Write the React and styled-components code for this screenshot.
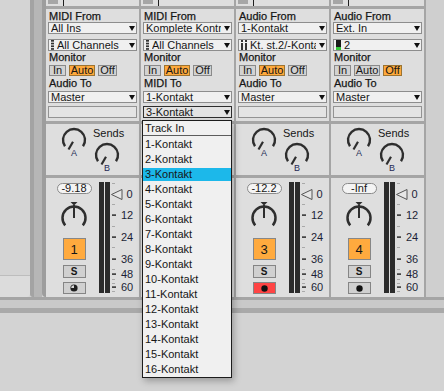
import React from "react";
import styled, { createGlobalStyle } from "styled-components";

const SEP = "#a5a5a5";
const INK = "#161616";

const GlobalStyle = createGlobalStyle`
  html, body {
    margin: 0;
    padding: 0;
    background: #d3d3d3;
  }
  body {
    font-family: "Liberation Sans", Arial, sans-serif;
    font-size: 11px;
    color: ${INK};
  }
  * {
    box-sizing: border-box;
  }
`;

const Page = styled.div`
  position: relative;
  width: 444px;
  height: 391px;
  overflow: hidden;
  display: flex;
  flex-direction: column;
  background: #d3d3d3;
`;

const Main = styled.div`
  display: flex;
  height: 297px;
  flex-shrink: 0;
`;

const LeftPane = styled.div`
  width: 30px;
  display: flex;
  flex-direction: column;
  background: #d4d4d4;
`;

const LeftFoot = styled.div`
  margin-top: auto;
  height: 22px;
  background: #dcdcdc;
  border-top: 1px solid #bdbdbd;
  border-bottom-right-radius: 4px;
`;

const Gutter = styled.div`
  width: 12px;
  background: #b6b6b6;
  border-left: 4px solid #a3a3a3;
  border-bottom-left-radius: 3px;
`;

const Tracks = styled.div`
  display: flex;
  gap: 2px;
  background: ${SEP};
  border-left: 4px solid #9d9d9d;
  border-right: 2px solid ${SEP};
  border-bottom-left-radius: 4px;
  overflow: hidden;
`;

const RightPane = styled.div`
  flex: 1;
  background: #cfcfcf;
`;

const Strip = styled.div`
  width: 93px;
  display: flex;
  flex-direction: column;
  background: #dedede;
`;

const Header = styled.div`
  height: 9px;
  flex-shrink: 0;
  display: flex;
  align-items: flex-start;
  gap: 5px;
  padding-left: 2px;
  border-bottom: 3px solid ${SEP};
`;

const HeaderTab = styled.div`
  width: 10px;
  height: 4px;
  background: #a6a6a6;
`;

const HeaderMark = styled.div`
  width: 1px;
  height: 6px;
  background: #1e1e1e;
`;

const IOSection = styled.div`
  height: 115px;
  flex-shrink: 0;
  display: flex;
  flex-direction: column;
  padding: 1px 2px 0;
  border-bottom: 3px solid ${SEP};
`;

const Label = styled.div`
  height: 12px;
  line-height: 12px;
  padding-left: 1px;
  margin-top: ${(p) => p.$mt || 0}px;
  white-space: nowrap;
  -webkit-text-stroke: 0.25px ${INK};
`;

const Chooser = styled.div`
  height: 12px;
  margin-top: ${(p) => p.$mt || 0}px;
  display: flex;
  align-items: center;
  gap: 3px;
  padding: 0 1px 0 2px;
  border: 1px solid ${(p) => (p.$open ? "#2e2e2e" : "#8d8d8d")};
  background: ${(p) => (p.$open ? "#e3e3e3" : "#f0f0f0")};
  line-height: 10px;
`;

const ChooserText = styled.span`
  flex: 1;
  min-width: 0;
  overflow: hidden;
  white-space: nowrap;
`;

const Caret = styled.span`
  flex-shrink: 0;
  width: 0;
  height: 0;
  border-left: 3.5px solid transparent;
  border-right: 3.5px solid transparent;
  border-top: 5px solid #111;
`;

const Blank = styled.div`
  height: 12px;
  margin-top: 3px;
  border: 1px solid #939393;
  background: #e4e4e4;
`;

const MonitorRow = styled.div`
  display: flex;
  gap: 3px;
  margin-top: 2px;
  padding-left: 1px;
`;

const MonButton = styled.div`
  width: ${(p) => p.$w}px;
  height: 11px;
  line-height: 9px;
  text-align: center;
  border: 1px solid ${(p) => (p.$on ? "#9c7432" : "#8a8a8a")};
  background: ${(p) => (p.$on ? "#ffa93c" : "#d2d2d2")};
`;

const SendsSection = styled.div`
  height: 54px;
  flex-shrink: 0;
  display: flex;
  gap: 5px;
  padding: 3px 0 0 14px;
  border-bottom: 3px solid ${SEP};
`;

const SendsCol = styled.div`
  display: flex;
  flex-direction: column;
`;

const SendsTitle = styled.div`
  height: 12px;
  line-height: 12px;
  margin-bottom: 3px;
`;

const MixerSection = styled.div`
  flex: 1;
  display: flex;
`;

const ControlCol = styled.div`
  width: 53px;
  padding-left: 3px;
  display: flex;
  flex-direction: column;
  align-items: center;
`;

const VolPill = styled.div`
  margin-top: 5px;
  width: 35px;
  height: 11px;
  line-height: 9px;
  text-align: center;
  border: 1px solid #8a8a8a;
  border-radius: 6px;
  background: #f4f4f4;
`;

const PanWrap = styled.div`
  margin-top: 7px;
  height: 33px;
`;

const TrackButton = styled.div`
  margin-top: 4px;
  width: 23px;
  height: 22px;
  display: flex;
  align-items: center;
  justify-content: center;
  background: #ffaa3e;
  border: 1px solid #878787;
  font-size: 13px;
`;

const SmallButton = styled.div`
  margin-top: ${(p) => p.$mt}px;
  width: 23px;
  height: ${(p) => p.$h}px;
  display: flex;
  align-items: center;
  justify-content: center;
  background: ${(p) => p.$bg || "#d0d0d0"};
  border: 1px solid #858585;
  font-size: 10px;
  font-weight: bold;
`;

const Bottom = styled.div`
  flex-shrink: 0;
  height: ${(p) => p.$h}px;
  background: ${(p) => p.$bg};
`;

const Menu = styled.div`
  position: absolute;
  left: 142px;
  top: 120px;
  width: 90px;
  height: 258px;
  background: #f0f0f0;
  border: 1px solid #1c1c1c;
  box-shadow: 2px 3px 7px rgba(0, 0, 0, 0.28);
  z-index: 5;
`;

const MenuHead = styled.div`
  height: 15px;
  line-height: 14px;
  padding-left: 2px;
  border-bottom: 1px solid #5c5c5c;
`;

const MenuList = styled.div`
  padding-top: 1px;
`;

const MenuItem = styled.div`
  height: 15px;
  padding: 1px 0;
  line-height: 13px;
  text-indent: 2px;
  background-clip: content-box;
  background-color: ${(p) => (p.$active ? "#1cb8ea" : "transparent")};
`;

/* small glyphs */

const ChannelDots = () => (
  <svg width="3" height="10" viewBox="0 0 3 10">
    {[0, 2.7, 5.4, 8.1].map((y) => (
      <rect key={y} x="0" y={y} width="3" height="1.7" fill="#333" />
    ))}
  </svg>
);

const PairIcon = () => (
  <svg width="6" height="10" viewBox="0 0 6 10">
    <rect x="0" y="0" width="2" height="2" fill="#333" />
    <rect x="0" y="3" width="2" height="7" fill="#333" />
    <rect x="4" y="0" width="2" height="2" fill="#333" />
    <rect x="4" y="3" width="2" height="7" fill="#333" />
  </svg>
);

const LevelIcon = () => (
  <svg width="5" height="10" viewBox="0 0 5 10">
    <rect x="0" y="0" width="5" height="10" fill="#1a1a1a" />
    <rect x="0" y="7" width="5" height="3" fill="#35c83a" />
  </svg>
);

const icons = { dots: ChannelDots, pair: PairIcon, level: LevelIcon };

const SendKnob = ({ letter }) => (
  <svg width="28" height="30" viewBox="0 0 28 30">
    <path
      d="M4.99 19.31 A11 11 0 1 1 23.01 19.31"
      fill="none"
      stroke="#2e2e2e"
      strokeWidth="2.4"
    />
    <line x1="13" y1="14.7" x2="8.5" y2="22.5" stroke="#2e2e2e" strokeWidth="2.2" />
    <text
      x="14"
      y="28.5"
      textAnchor="middle"
      fontSize="9"
      fill="#1f2a55"
      fontFamily="Liberation Sans, Arial, sans-serif"
    >
      {letter}
    </text>
  </svg>
);

const PanKnob = () => (
  <svg width="30" height="33" viewBox="0 0 30 33">
    <path
      d="M6.19 24.39 A11.5 11.5 0 1 1 23.81 24.39"
      fill="none"
      stroke="#2e2e2e"
      strokeWidth="2.5"
    />
    <polygon points="11.5,1 18.5,1 15,4.5" fill="#2e2e2e" />
    <line x1="15" y1="4" x2="15" y2="17" stroke="#2e2e2e" strokeWidth="2" />
  </svg>
);

const MidiArmIcon = () => (
  <svg width="8" height="8" viewBox="0 0 8 8">
    <circle cx="4" cy="4" r="3.6" fill="#1e1e1e" />
    <path d="M4 4 L4 1.2 A2.8 2.8 0 0 0 1.2 4 Z" fill="#d8d8d8" />
  </svg>
);

const Dot = () => (
  <svg width="7" height="7" viewBox="0 0 7 7">
    <circle cx="3.5" cy="3.5" r="3.2" fill="#111" />
  </svg>
);

const greyTicks = [5, 26, 48, 69, 91, 101, 105, 113];
const marks = [
  [37, "12"],
  [59, "24"],
  [81, "36"],
  [96, "48"],
  [109, "60"],
];

const Meter = () => (
  <svg width="40" height="119" viewBox="0 0 40 119">
    <rect x="0" y="4" width="5" height="111" fill="#2b2b2b" />
    <rect x="6" y="4" width="5" height="111" fill="#2b2b2b" />
    {greyTicks.map((y) => (
      <rect key={y} x="13" y={y} width="3" height="1" fill="#a9a9a9" />
    ))}
    {marks.map(([y, l]) => (
      <g key={l}>
        <rect x="13" y={y - 0.6} width="4" height="1.4" fill="#202020" />
        <text
          x="22"
          y={y + 4}
          fontSize="11"
          fill="#1c1e36"
          fontFamily="Liberation Sans, Arial, sans-serif"
        >
          {l}
        </text>
      </g>
    ))}
    <polygon points="12.5,16.5 23,11.5 23,21.5" fill="#e6e6e6" stroke="#555" strokeWidth="1" />
    <text x="27.5" y="19.5" fontSize="11" fill="#1c1e36" fontFamily="Liberation Sans, Arial, sans-serif">
      0
    </text>
  </svg>
);

const tracks = [
  {
    fromLabel: "MIDI From",
    source: "All Ins",
    channel: "All Channels",
    icon: "dots",
    monitor: "Auto",
    toLabel: "Audio To",
    target: "Master",
    vol: "-9.18",
    num: "1",
    arm: "midi",
  },
  {
    fromLabel: "MIDI From",
    source: "Komplete Kontrol A",
    channel: "All Channels",
    icon: "dots",
    monitor: "Auto",
    toLabel: "MIDI To",
    target: "1-Kontakt",
    sub: "3-Kontakt",
    covered: true,
  },
  {
    fromLabel: "Audio From",
    source: "1-Kontakt",
    channel: "Kt. st.2/-Kontakt",
    icon: "pair",
    monitor: "Auto",
    toLabel: "Audio To",
    target: "Master",
    vol: "-12.2",
    num: "3",
    arm: "on",
  },
  {
    fromLabel: "Audio From",
    source: "Ext. In",
    channel: "2",
    icon: "level",
    monitor: "Off",
    toLabel: "Audio To",
    target: "Master",
    vol: "-Inf",
    num: "4",
    arm: "off",
  },
];

const monitorButtons = [
  ["In", 17],
  ["Auto", 26],
  ["Off", 19],
];

const menuItems = Array.from({ length: 16 }, (_, i) => `${i + 1}-Kontakt`);

const Track = ({ t }) => {
  const Icon = icons[t.icon];
  return (
    <Strip>
      <Header>
        <HeaderTab />
        <HeaderMark />
      </Header>
      <IOSection>
        <Label>{t.fromLabel}</Label>
        <Chooser>
          <ChooserText>{t.source}</ChooserText>
          <Caret />
        </Chooser>
        <Chooser $mt={5}>
          <Icon />
          <ChooserText>{t.channel}</ChooserText>
          <Caret />
        </Chooser>
        <Label>Monitor</Label>
        <MonitorRow>
          {monitorButtons.map(([name, w]) => (
            <MonButton key={name} $w={w} $on={t.monitor === name}>
              {name}
            </MonButton>
          ))}
        </MonitorRow>
        <Label $mt={1}>{t.toLabel}</Label>
        <Chooser $mt={2}>
          <ChooserText>{t.target}</ChooserText>
          <Caret />
        </Chooser>
        {t.sub ? (
          <Chooser $mt={3} $open>
            <ChooserText>{t.sub}</ChooserText>
            <Caret />
          </Chooser>
        ) : (
          <Blank />
        )}
      </IOSection>
      <SendsSection>
        {!t.covered && (
          <>
            <SendKnob letter="A" />
            <SendsCol>
              <SendsTitle>Sends</SendsTitle>
              <SendKnob letter="B" />
            </SendsCol>
          </>
        )}
      </SendsSection>
      <MixerSection>
        {!t.covered && (
          <>
            <ControlCol>
              <VolPill>{t.vol}</VolPill>
              <PanWrap>
                <PanKnob />
              </PanWrap>
              <TrackButton>{t.num}</TrackButton>
              <SmallButton $mt={5} $h={13}>
                S
              </SmallButton>
              <SmallButton
                $mt={4}
                $h={12}
                $bg={t.arm === "on" ? "#ff4444" : "#d0d0d0"}
              >
                {t.arm === "midi" ? <MidiArmIcon /> : <Dot />}
              </SmallButton>
            </ControlCol>
            <Meter />
          </>
        )}
      </MixerSection>
    </Strip>
  );
};

export default function App() {
  return (
    <>
      <GlobalStyle />
      <Page>
        <Main>
          <LeftPane>
            <LeftFoot />
          </LeftPane>
          <Gutter />
          <Tracks>
            {tracks.map((t, i) => (
              <Track key={i} t={t} />
            ))}
          </Tracks>
          <RightPane />
        </Main>
        <Bottom $h={3} $bg="#a5a5a5" />
        <Bottom $h={8} $bg="#c9c9c9" />
        <Bottom $h={5} $bg="#a9a9a9" />
        <Menu>
          <MenuHead>Track In</MenuHead>
          <MenuList>
            {menuItems.map((m) => (
              <MenuItem key={m} $active={m === "3-Kontakt"}>
                {m}
              </MenuItem>
            ))}
          </MenuList>
        </Menu>
      </Page>
    </>
  );
}
